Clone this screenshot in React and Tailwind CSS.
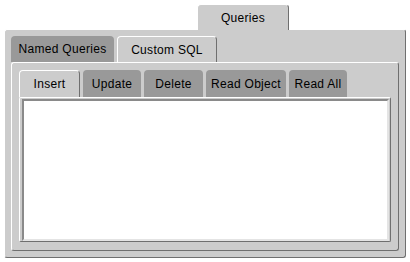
import React from 'react';

const outerTabs = [
  { label: 'Named Queries', w: 'w-[103px]', active: false },
  { label: 'Custom SQL', w: 'w-[100px]', active: true },
];

const sqlTabs = [
  { label: 'Insert', w: 'w-[61px]', active: true },
  { label: 'Update', w: 'w-[58px]', active: false },
  { label: 'Delete', w: 'w-[59px]', active: false },
  { label: 'Read Object', w: 'w-[80px]', active: false },
  { label: 'Read All', w: 'w-[58px]', active: false },
];

const Tab = ({ label, w, h, active }) => (
  <div
    className={
      active
        ? `${w} ${h} relative z-10 -mb-px flex items-center justify-center rounded-t-[4px] border-t border-l border-r border-t-white border-l-white border-r-[#6f6f6f] bg-[#cccccc]`
        : `${w} ${h} flex items-center justify-center rounded-t-[4px] bg-[#999999]`
    }
  >
    {label}
  </div>
);

export default function App() {
  return (
    <div className="w-[410px] h-[262px] bg-white pt-[4px] pl-[4px] font-['Liberation_Sans',Arial,sans-serif] text-[12px] leading-none tracking-[0.3px] text-black">
      {/* top level tab */}
      <div className="flex pl-[193px]">
        <Tab label="Queries" w="w-[92px]" h="h-[26px]" active />
      </div>

      <div className="w-[402px] h-[229px] rounded-[3px] border border-t-white border-l-white border-r-[#6f6f6f] border-b-[#6f6f6f] bg-[#cccccc] pt-[6px] pl-[6px]">
        <div className="flex gap-[3px]">
          {outerTabs.map(t => (
            <Tab key={t.label} label={t.label} w={t.w} h="h-[26px]" active={t.active} />
          ))}
        </div>

        <div className="w-[388px] h-[189px] rounded-[3px] border border-t-white border-l-white border-r-[#6f6f6f] border-b-[#6f6f6f] pt-[7px] pl-[7px]">
          <div className="flex gap-[3px]">
            {sqlTabs.map(t => (
              <Tab key={t.label} label={t.label} w={t.w} h="h-[27px]" active={t.active} />
            ))}
          </div>

          <div className="w-[372px] h-[145px] rounded-[2px] border border-t-white border-l-white border-r-[#6f6f6f] border-b-[#6f6f6f] p-[1px] pl-[2px]">
            <div className="w-[367px] h-[142px] border-2 border-t-[#8a8a8a] border-l-[#8a8a8a] border-r-[#e4e4e4] border-b-[#e4e4e4] bg-white" />
          </div>
        </div>
      </div>
    </div>
  );
}
